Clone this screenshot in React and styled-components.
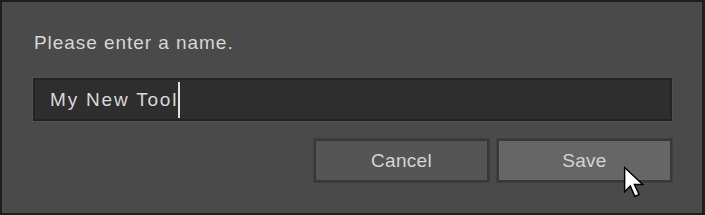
import React from "react";
import styled, { createGlobalStyle } from "styled-components";

const Global = createGlobalStyle`
  html, body {
    margin: 0;
    padding: 0;
    background: #1a1a1a;
  }
  * { box-sizing: border-box; }
`;

export default function App() {
  return (
    <>
      <Global />
      <Dialog>
        <Label>Please enter a name.</Label>
        <NameField>
          <Value>My New Tool</Value>
          <Caret />
        </NameField>
        <Actions>
          <Button>Cancel</Button>
          <Button hover>Save</Button>
        </Actions>
        <Pointer viewBox="0 0 26 32" width="27" height="33">
          <path
            d="M1.5 1.5 L1.5 25 L7 19.5 L11.5 29.5 L15.5 27.5 L11 18 L19 18 Z"
            fill="#ffffff"
            stroke="#000000"
            strokeWidth="1.4"
            strokeLinejoin="miter"
          />
        </Pointer>
      </Dialog>
    </>
  );
}

const Dialog = styled.div`
  position: relative;
  width: 705px;
  height: 215px;
  background: #4a4a4a;
  border: 2px solid #1e1e1e;
  border-right-width: 3px;
  padding: 29px 30px 0 31px;
  display: flex;
  flex-direction: column;
  font-family: "Liberation Sans", Arial, sans-serif;
  color: #d6d6d6;
`;

const Label = styled.div`
  font-size: 19px;
  line-height: 24px;
  padding-left: 1px;
  letter-spacing: 0.95px;
`;

const NameField = styled.div`
  margin-top: 23px;
  height: 43px;
  background: #2e2e2e;
  border: 2px solid #242424;
  box-shadow: 0 0 0 1px #505050;
  display: flex;
  align-items: center;
  padding-left: 15px;
`;

const Value = styled.span`
  font-size: 19px;
  letter-spacing: 1.8px;
  color: #d8d8d8;
`;

const Caret = styled.span`
  width: 2px;
  height: 36px;
  margin-left: 0;
  background: #e0e0e0;
`;

const Actions = styled.div`
  margin-top: 18px;
  display: flex;
  justify-content: flex-end;
  gap: 8px;
`;

const Button = styled.div`
  width: 175px;
  height: 43px;
  display: flex;
  align-items: center;
  justify-content: center;
  font-size: 19px;
  letter-spacing: 0.3px;
  color: #d4d4d4;
  background: ${(p) => (p.hover ? "#666666" : "#555555")};
  border: 2px solid #383838;
  box-shadow: 0 0 0 1px #404040;
`;

const Pointer = styled.svg`
  position: absolute;
  left: 621px;
  top: 164px;
`;
